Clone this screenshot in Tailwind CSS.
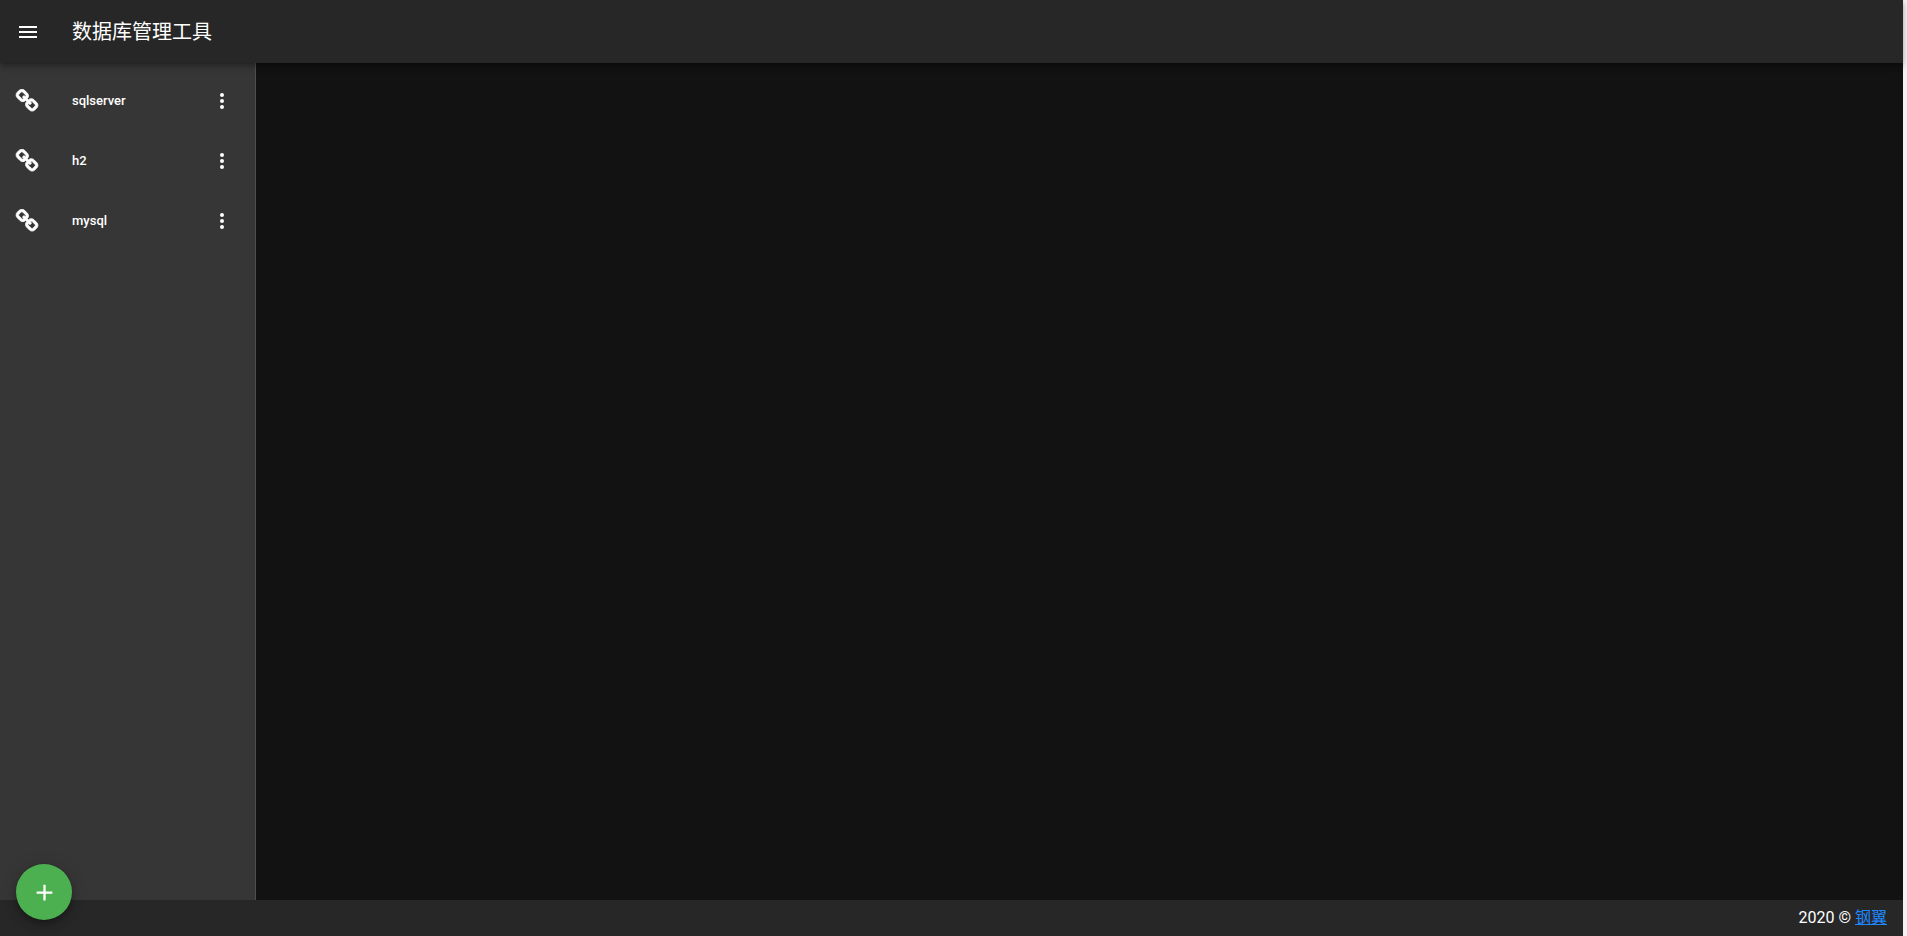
<!DOCTYPE html>
<html lang="zh-CN">
<head>
  <meta charset="UTF-8">
  <title>数据库管理工具</title>
  <script src="https://cdn.jsdelivr.net/npm/@tailwindcss/browser@4"></script>
</head>
<body class="bg-[#f1f1f1] text-white h-screen overflow-hidden font-['Roboto','Noto_Sans_CJK_SC',sans-serif]">
  <div class="relative flex flex-col h-screen mr-1 bg-[#121212]">
    <!-- top bar -->
    <header class="relative z-10 h-[63px] shrink-0 flex items-center bg-[#272727] shadow-[0_2px_4px_-1px_rgba(0,0,0,0.2),0_4px_5px_0_rgba(0,0,0,0.14),0_1px_10px_0_rgba(0,0,0,0.12)]">
      <svg class="w-6 h-6 ml-4 shrink-0 fill-white" viewBox="0 0 24 24"><path d="M3,6H21V8H3V6M3,11H21V13H3V11M3,16H21V18H3V16Z"/></svg>
      <h1 class="ml-[32px] text-[20px] font-normal leading-none">数据库管理工具</h1>
    </header>

    <div class="flex flex-1 min-h-0">
      <!-- connection list -->
      <aside class="w-[256px] shrink-0 bg-[#363636] border-r border-white/12 pt-[8px]">
        <div class="h-[60px] flex items-center pl-[15px] pr-[21px]">
          <svg class="w-6 h-6 shrink-0 fill-white stroke-white stroke-[60]" viewBox="0 0 1792 1792"><path d="M1520 1216q0-40-28-68l-208-208q-28-28-68-28-42 0-72 32 3 3 19 18.5t21.5 21.5 15 19 13 25.5 3.5 27.5q0 40-28 68t-68 28q-15 0-27.5-3.5t-25.5-13-19-15-21.5-21.5-18.5-19q-33 31-33 73 0 40 28 68l206 207q27 27 68 27 40 0 68-26l147-146q28-28 28-67zm-703-705q0-40-28-68l-206-207q-28-28-68-28-39 0-68 27l-147 146q-28 28-28 67 0 40 28 68l208 208q27 27 68 27 42 0 72-31-3-3-19-18.5t-21.5-21.5-15-19-13-25.5-3.5-27.5q0-40 28-68t68-28q15 0 27.5 3.5t25.5 13 19 15 21.5 21.5 18.5 19q33-31 33-73zm895 705q0 120-85 203l-147 146q-83 83-203 83-121 0-204-85l-206-207q-83-83-83-203 0-123 88-209l-88-88q-86 88-208 88-120 0-204-84l-208-208q-84-84-84-204t85-203l147-146q83-83 203-83 121 0 204 85l206 207q83 83 83 203 0 123-88 209l88 88q86-88 208-88 120 0 204 84l208 208q84 84 84 204z"/></svg>
          <span class="ml-[33px] flex-1 text-[13px] font-medium">sqlserver</span>
          <svg class="w-6 h-6 fill-white" viewBox="0 0 24 24"><path d="M12,16A2,2 0 0,1 14,18A2,2 0 0,1 12,20A2,2 0 0,1 10,18A2,2 0 0,1 12,16M12,10A2,2 0 0,1 14,12A2,2 0 0,1 12,14A2,2 0 0,1 10,12A2,2 0 0,1 12,10M12,4A2,2 0 0,1 14,6A2,2 0 0,1 12,8A2,2 0 0,1 10,6A2,2 0 0,1 12,4Z"/></svg>
        </div>
        <div class="h-[60px] flex items-center pl-[15px] pr-[21px]">
          <svg class="w-6 h-6 shrink-0 fill-white stroke-white stroke-[60]" viewBox="0 0 1792 1792"><path d="M1520 1216q0-40-28-68l-208-208q-28-28-68-28-42 0-72 32 3 3 19 18.5t21.5 21.5 15 19 13 25.5 3.5 27.5q0 40-28 68t-68 28q-15 0-27.5-3.5t-25.5-13-19-15-21.5-21.5-18.5-19q-33 31-33 73 0 40 28 68l206 207q27 27 68 27 40 0 68-26l147-146q28-28 28-67zm-703-705q0-40-28-68l-206-207q-28-28-68-28-39 0-68 27l-147 146q-28 28-28 67 0 40 28 68l208 208q27 27 68 27 42 0 72-31-3-3-19-18.5t-21.5-21.5-15-19-13-25.5-3.5-27.5q0-40 28-68t68-28q15 0 27.5 3.5t25.5 13 19 15 21.5 21.5 18.5 19q33-31 33-73zm895 705q0 120-85 203l-147 146q-83 83-203 83-121 0-204-85l-206-207q-83-83-83-203 0-123 88-209l-88-88q-86 88-208 88-120 0-204-84l-208-208q-84-84-84-204t85-203l147-146q83-83 203-83 121 0 204 85l206 207q83 83 83 203 0 123-88 209l88 88q86-88 208-88 120 0 204 84l208 208q84 84 84 204z"/></svg>
          <span class="ml-[33px] flex-1 text-[13px] font-medium">h2</span>
          <svg class="w-6 h-6 fill-white" viewBox="0 0 24 24"><path d="M12,16A2,2 0 0,1 14,18A2,2 0 0,1 12,20A2,2 0 0,1 10,18A2,2 0 0,1 12,16M12,10A2,2 0 0,1 14,12A2,2 0 0,1 12,14A2,2 0 0,1 10,12A2,2 0 0,1 12,10M12,4A2,2 0 0,1 14,6A2,2 0 0,1 12,8A2,2 0 0,1 10,6A2,2 0 0,1 12,4Z"/></svg>
        </div>
        <div class="h-[60px] flex items-center pl-[15px] pr-[21px]">
          <svg class="w-6 h-6 shrink-0 fill-white stroke-white stroke-[60]" viewBox="0 0 1792 1792"><path d="M1520 1216q0-40-28-68l-208-208q-28-28-68-28-42 0-72 32 3 3 19 18.5t21.5 21.5 15 19 13 25.5 3.5 27.5q0 40-28 68t-68 28q-15 0-27.5-3.5t-25.5-13-19-15-21.5-21.5-18.5-19q-33 31-33 73 0 40 28 68l206 207q27 27 68 27 40 0 68-26l147-146q28-28 28-67zm-703-705q0-40-28-68l-206-207q-28-28-68-28-39 0-68 27l-147 146q-28 28-28 67 0 40 28 68l208 208q27 27 68 27 42 0 72-31-3-3-19-18.5t-21.5-21.5-15-19-13-25.5-3.5-27.5q0-40 28-68t68-28q15 0 27.5 3.5t25.5 13 19 15 21.5 21.5 18.5 19q33-31 33-73zm895 705q0 120-85 203l-147 146q-83 83-203 83-121 0-204-85l-206-207q-83-83-83-203 0-123 88-209l-88-88q-86 88-208 88-120 0-204-84l-208-208q-84-84-84-204t85-203l147-146q83-83 203-83 121 0 204 85l206 207q83 83 83 203 0 123-88 209l88 88q86-88 208-88 120 0 204 84l208 208q84 84 84 204z"/></svg>
          <span class="ml-[33px] flex-1 text-[13px] font-medium">mysql</span>
          <svg class="w-6 h-6 fill-white" viewBox="0 0 24 24"><path d="M12,16A2,2 0 0,1 14,18A2,2 0 0,1 12,20A2,2 0 0,1 10,18A2,2 0 0,1 12,16M12,10A2,2 0 0,1 14,12A2,2 0 0,1 12,14A2,2 0 0,1 10,12A2,2 0 0,1 12,10M12,4A2,2 0 0,1 14,6A2,2 0 0,1 12,8A2,2 0 0,1 10,6A2,2 0 0,1 12,4Z"/></svg>
        </div>
      </aside>
      <main class="flex-1 bg-[#121212]"></main>
    </div>

    <footer class="h-9 shrink-0 flex items-center justify-end bg-[#272727] pr-4 text-base">
      <span>2020 © <a href="#" class="text-[#1e88ff] underline">钢翼</a></span>
    </footer>

    <!-- add connection -->
    <button class="absolute left-4 bottom-4 w-14 h-14 rounded-full bg-[#4caf50] flex items-center justify-center shadow-[0_3px_5px_-1px_rgba(0,0,0,0.2),0_6px_10px_0_rgba(0,0,0,0.14),0_1px_18px_0_rgba(0,0,0,0.12)]">
      <svg class="w-[27px] h-[27px] fill-white" viewBox="0 0 24 24"><path d="M19,13H13V19H11V13H5V11H11V5H13V11H19V13Z"/></svg>
    </button>
  </div>
</body>
</html>
